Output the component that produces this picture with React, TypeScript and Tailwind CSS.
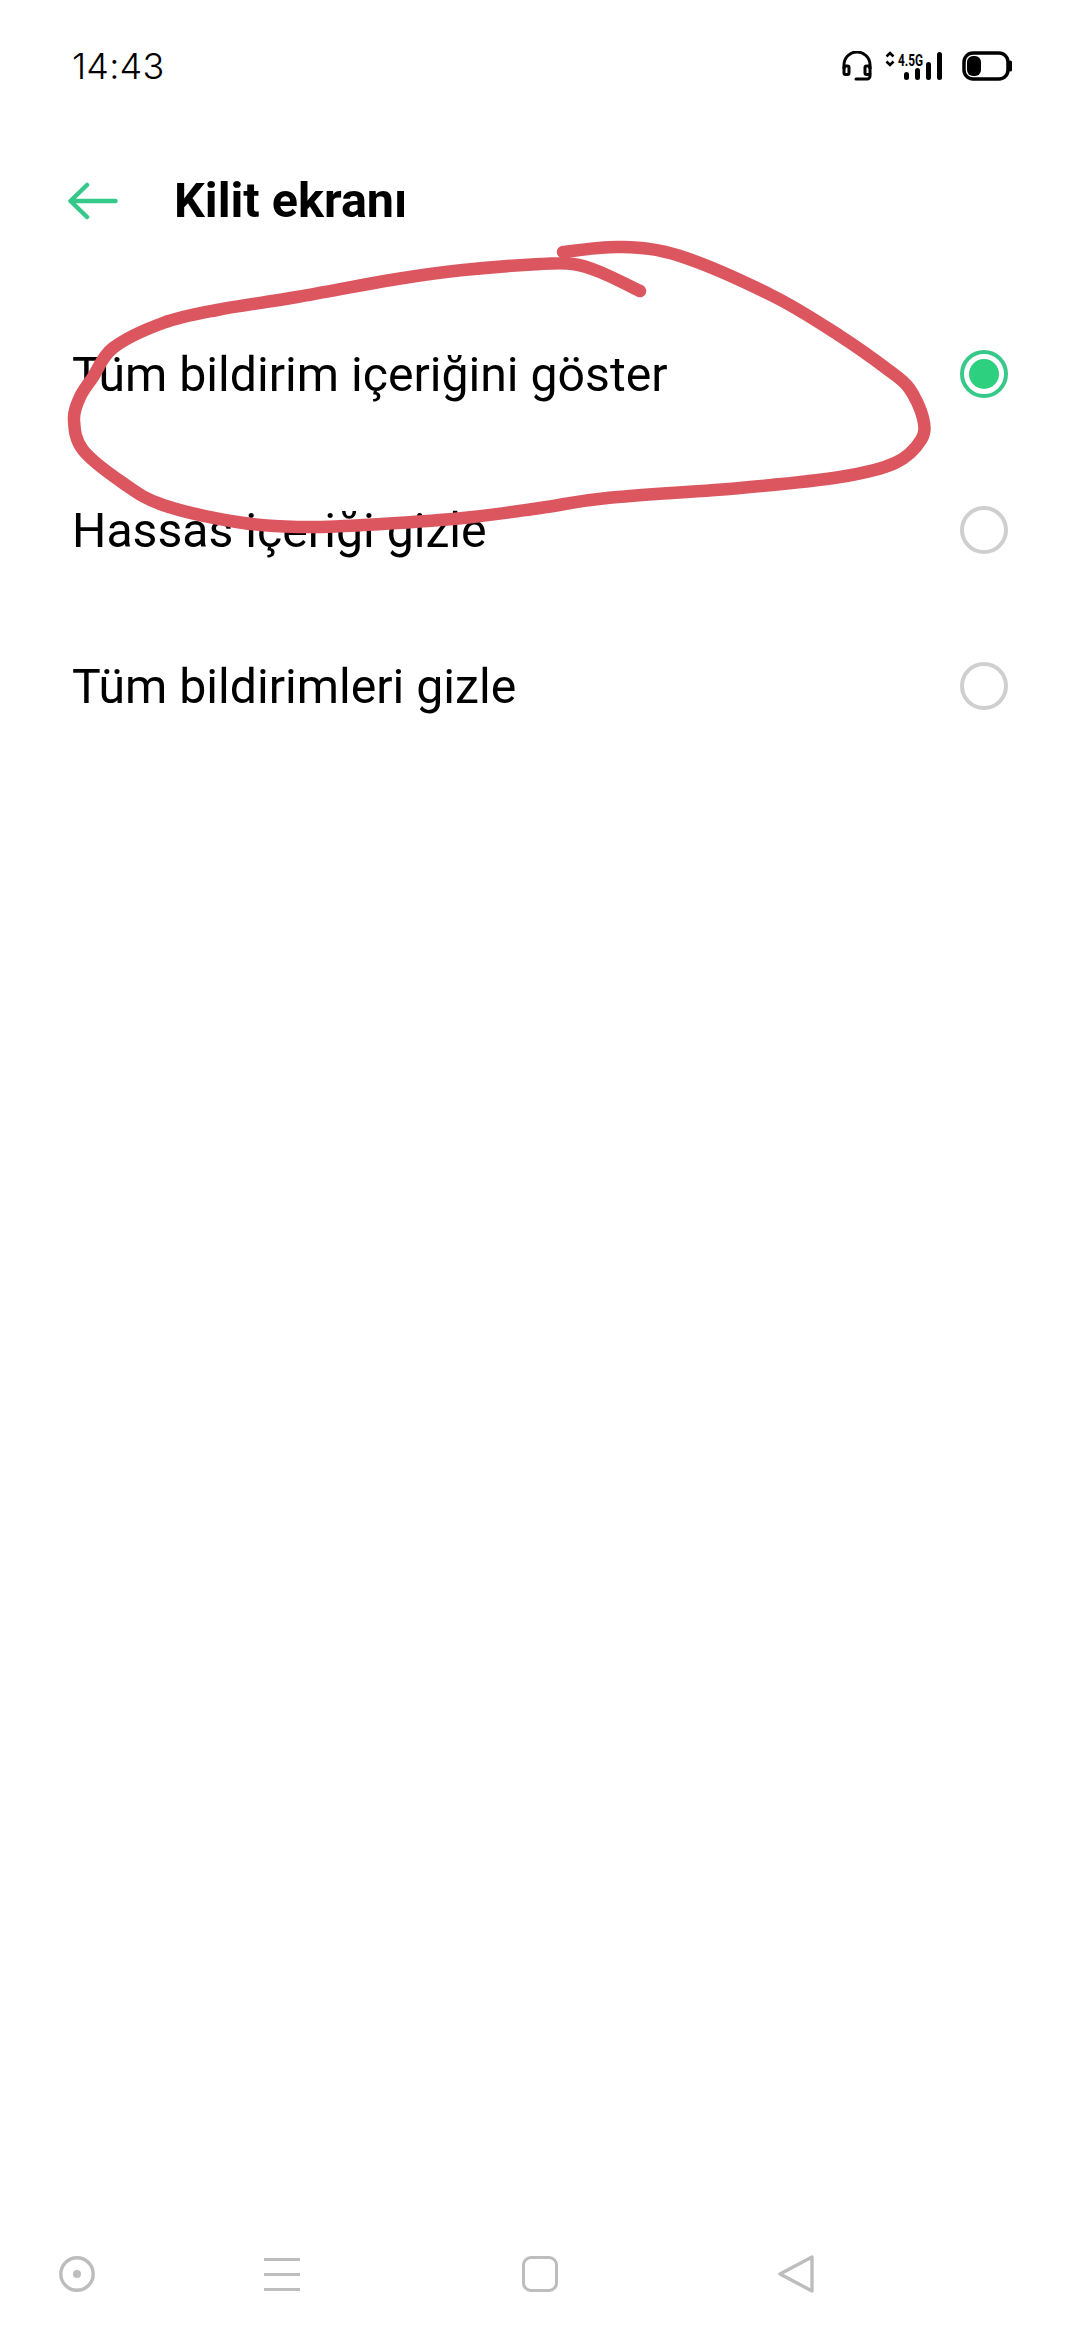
const rows = [
  { label: "Tüm bildirim içeriğini göster", checked: true },
  { label: "Hassas içeriği gizle", checked: false },
  { label: "Tüm bildirimleri gizle", checked: false },
];

// points of the red marker stroke, in page pixels
const scribble: [number, number][] = [
  [563, 252], [620, 247], [680, 256], [773, 296], [840, 336], [887, 369], [909, 388], [923, 418],
  [921, 440], [895, 463], [840, 477], [740, 488], [607, 498], [540, 508], [463, 518],
  [363, 525], [297, 527], [237, 522], [163, 505], [123, 483], [83, 450], [74, 420], [80, 397],
  [93, 377], [113, 348], [163, 323], [217, 310], [297, 297], [397, 279], [463, 270], [540, 264],
  [573, 264], [600, 272], [640, 291],
];

function smoothPath(pts: [number, number][]) {
  let d = `M${pts[0][0]} ${pts[0][1]}`;
  for (let i = 0; i < pts.length - 1; i++) {
    const p0 = pts[Math.max(i - 1, 0)];
    const p1 = pts[i];
    const p2 = pts[i + 1];
    const p3 = pts[Math.min(i + 2, pts.length - 1)];
    const c1x = p1[0] + (p2[0] - p0[0]) / 6;
    const c1y = p1[1] + (p2[1] - p0[1]) / 6;
    const c2x = p2[0] - (p3[0] - p1[0]) / 6;
    const c2y = p2[1] - (p3[1] - p1[1]) / 6;
    d += ` C${c1x} ${c1y} ${c2x} ${c2y} ${p2[0]} ${p2[1]}`;
  }
  return d;
}

function Headset() {
  return (
    <svg width="30" height="30" viewBox="0 0 30 30" fill="none" stroke="#000" strokeWidth={3}>
      <path d="M2 18V14a13 13 0 0 1 26 0v4" />
      <rect x="2" y="15" width="5" height="8.5" rx="1.5" />
      <rect x="23" y="15" width="5" height="8.5" rx="1.5" />
      <path d="M28 23v2a3 3 0 0 1-3 3H14" strokeLinecap="round" />
    </svg>
  );
}

function Network() {
  return (
    <svg width="60" height="30" viewBox="0 0 60 30" fill="#000">
      <path d="M2.5 5.5L6 2l3.5 3.5M2.5 10.5L6 14l3.5-3.5" fill="none" stroke="#000" strokeWidth={2.6} />
      <text
        x="14"
        y="15"
        fontFamily="Roboto, sans-serif"
        fontSize="16"
        fontWeight="700"
        textLength="25"
        lengthAdjust="spacingAndGlyphs"
      >
        4.5G
      </text>
      <rect x="20" y="21" width="5" height="8" rx="2.5" />
      <rect x="31" y="17" width="5" height="12" rx="2.5" />
      <rect x="42" y="11" width="5" height="18" rx="2.5" />
      <rect x="53" y="1" width="5" height="28" rx="2.5" />
    </svg>
  );
}

function Battery() {
  return (
    <svg width="50" height="30" viewBox="0 0 50 30" fill="none">
      <rect x="2" y="2" width="44" height="26" rx="9" stroke="#000" strokeWidth={3.5} />
      <rect x="5" y="5" width="14" height="20" rx="6" fill="#000" />
      <path d="M48.5 11v8" stroke="#000" strokeWidth={3} strokeLinecap="round" />
    </svg>
  );
}

function BackArrow() {
  return (
    <svg width="50" height="38" viewBox="0 0 50 38" fill="none" stroke="#34C98A" strokeWidth={4.5} strokeLinecap="round" strokeLinejoin="round">
      <path d="M2.5 19h45M19 3L2.5 19 19 35" />
    </svg>
  );
}

function Radio({ checked }: { checked: boolean }) {
  if (checked) {
    return (
      <div className="w-12 h-12 rounded-full border-4 border-[#36C98A] flex items-center justify-center">
        <div className="w-[30px] h-[30px] rounded-full bg-[#2DD07F]" />
      </div>
    );
  }
  return <div className="w-12 h-12 rounded-full border-4 border-[#CFCFCF]" />;
}

export default function App() {
  return (
    <div className="relative min-h-[2340px] bg-white flex flex-col font-['Roboto',sans-serif] text-black overflow-hidden">
      {/* Status bar */}
      <div className="h-[132px] flex items-center justify-between pl-[72px] pr-[68px]">
        <span className="font-['Inter',sans-serif] text-[36px] font-light tracking-[0.2px] leading-none">14:43</span>
        <div className="flex items-center">
          <Headset />
          <div className="ml-[12px]">
            <Network />
          </div>
          <div className="ml-[18px]">
            <Battery />
          </div>
        </div>
      </div>

      {/* Header */}
      <div className="h-[138px] flex items-center pl-[68px]">
        <BackArrow />
        <h1 className="ml-[56px] text-[48.5px] font-bold leading-none">Kilit ekranı</h1>
      </div>

      {/* Options */}
      <div className="mt-[26px]">
        {rows.map((row) => (
          <div key={row.label} className="h-[156px] flex items-center justify-between pl-[72px] pr-[72px]">
            <span className="mt-[3px] text-[48.2px] leading-none">{row.label}</span>
            <Radio checked={row.checked} />
          </div>
        ))}
      </div>

      {/* Navigation bar */}
      <div className="mt-auto h-[132px] flex items-center pl-[59px]">
        <svg width="36" height="36" viewBox="0 0 36 36" fill="none">
          <circle cx="18" cy="18" r="16.2" stroke="#BDBDBD" strokeWidth={3.4} />
          <circle cx="18" cy="18" r="4" fill="#BDBDBD" />
        </svg>
        <div className="ml-[169px] w-9 flex flex-col gap-3">
          <div className="h-[3px] bg-[#BDBDBD]" />
          <div className="h-[3px] bg-[#BDBDBD]" />
          <div className="h-[3px] bg-[#BDBDBD]" />
        </div>
        <div className="ml-[222px] w-9 h-9 rounded-[9px] border-[3.5px] border-[#BDBDBD]" />
        <svg className="ml-[220px]" width="36" height="40" viewBox="0 0 36 40" fill="none">
          <path d="M34 3L2 20l32 17z" stroke="#BDBDBD" strokeWidth={3.4} strokeLinejoin="round" />
        </svg>
      </div>

      {/* Red marker drawn over the screenshot */}
      <svg className="absolute inset-0 pointer-events-none" width="1080" height="2340" viewBox="0 0 1080 2340" fill="none">
        <path d={smoothPath(scribble)} stroke="#DB565F" strokeWidth={12.5} strokeLinecap="round" strokeLinejoin="round" />
      </svg>
    </div>
  );
}
